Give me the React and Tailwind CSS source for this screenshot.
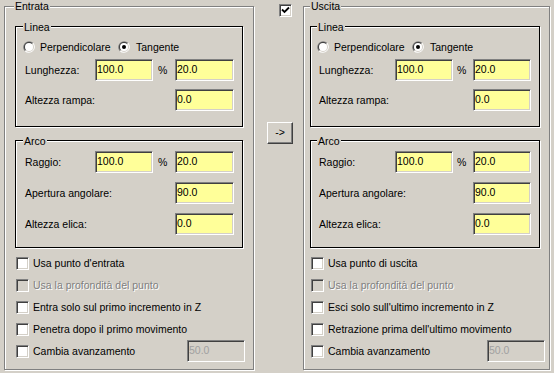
import React from "react";

const Radio = ({ checked }) => (
    <svg width="12" height="12" viewBox="0 0 12 12" className="shrink-0">
        <path d="M1.76 10.24 A6 6 0 0 1 10.24 1.76 Z" fill="#808080" />
        <path d="M1.76 10.24 A6 6 0 0 0 10.24 1.76 Z" fill="#ffffff" />
        <path d="M2.46 9.54 A5 5 0 0 1 9.54 2.46 Z" fill="#404040" />
        <path d="M2.46 9.54 A5 5 0 0 0 9.54 2.46 Z" fill="#d4d0c8" />
        <circle cx="6" cy="6" r="4" fill="#ffffff" />
        {checked && <circle cx="6" cy="6" r="2" fill="#000000" />}
    </svg>
);

const CheckBox = ({ checked, disabled }) => (
    <span
        className={`flex h-[13px] w-[13px] shrink-0 items-center justify-center border border-t-[#808080] border-l-[#808080] border-b-white border-r-white shadow-[inset_1px_1px_0_#404040,inset_-1px_-1px_0_#d4d0c8] ${disabled ? "bg-[#d4d0c8]" : "bg-white"}`}
    >
        {checked && (
            <svg width="9" height="9" viewBox="0 0 9 9">
                <path d="M1 3.5 L3.5 6 L8 1.5" fill="none" stroke="#000" strokeWidth="1.8" />
            </svg>
        )}
    </span>
);

const Field = ({ value, disabled, className = "" }) => (
    <div
        className={`flex h-[22px] items-center border border-t-[#808080] border-l-[#808080] border-b-white border-r-white pb-[2px] pl-[1px] shadow-[inset_1px_1px_0_#404040,inset_-1px_-1px_0_#d4d0c8] ${disabled ? "bg-[#d4d0c8] text-[#a0a0a0]" : "bg-[#ffff99]"} ${className}`}
    >
        {value}
    </div>
);

const GroupBox = ({ title, labelClass, className, children }) => (
    <div className={`relative border border-[#808080] shadow-[inset_1px_1px_0_#fff,1px_1px_0_#fff] ${className}`}>
        <span className={`absolute bg-[#d4d0c8] px-[1px] ${labelClass}`}>{title}</span>
        {children}
    </div>
);

const InnerBox = ({ title, labelClass, className, children }) => (
    <div className={`relative border border-black shadow-[inset_1px_1px_0_#fff,1px_1px_0_#fff] ${className}`}>
        <span className={`absolute top-[-6px] bg-[#d4d0c8] px-[1px] ${labelClass}`}>{title}</span>
        {children}
    </div>
);

const Side = ({ side }) => {
    const left = side === "left";
    const grid = left ? "grid-cols-[70px_58px_22px_59px] pl-[9px]" : "grid-cols-[76px_58px_20px_58px] pl-[8px]";
    const pct = left ? "pl-[5px]" : "pl-[4px]";
    const innerLabel = left ? "left-[7px]" : "left-[6px]";
    const innerW = left ? "w-[228px]" : "w-[230px]";

    const checks = left
        ? [
              { text: "Usa punto d'entrata" },
              { text: "Usa la profondità del punto", disabled: true },
              { text: "Entra solo sul primo incremento in Z" },
              { text: "Penetra dopo il primo movimento" },
          ]
        : [
              { text: "Usa punto di uscita" },
              { text: "Usa la profondità del punto", disabled: true },
              { text: "Esci solo sull'ultimo incremento in Z" },
              { text: "Retrazione prima dell'ultimo movimento" },
          ];

    return (
        <GroupBox
            title={left ? "Entrata" : "Uscita"}
            labelClass={left ? "left-[9px] top-[-7px]" : "left-[6px] top-[-7px]"}
            className={left ? "mt-[6px] h-[364px] w-[250px] pl-[10px] pt-[19px]" : "mt-[6px] h-[364px] w-[247px] pl-[6px] pt-[19px]"}
        >
            {/* Linea */}
            <InnerBox title="Linea" labelClass={innerLabel} className={`h-[101px] ${innerW} pt-[12px]`}>
                <div className={`flex h-[16px] items-center ${left ? "pl-[7px]" : "pl-[6px]"}`}>
                    <label className="flex w-[95px] items-center gap-[5px]">
                        <Radio />
                        <span>Perpendicolare</span>
                    </label>
                    <label className="flex items-center gap-[6px]">
                        <Radio checked />
                        <span>Tangente</span>
                    </label>
                </div>
                <div className={`mt-[4px] grid ${grid} items-center gap-y-[8px]`}>
                    <span>Lunghezza:</span>
                    <Field value="100.0" />
                    <span className={pct}>%</span>
                    <Field value="20.0" />
                    <span className="col-span-3">Altezza rampa:</span>
                    <Field value="0.0" />
                </div>
            </InnerBox>

            {/* Arco */}
            <InnerBox title="Arco" labelClass={innerLabel} className={`mt-[13px] h-[108px] ${innerW} pt-[10px]`}>
                <div className={`grid ${grid} items-center gap-y-[9px]`}>
                    <span>Raggio:</span>
                    <Field value="100.0" />
                    <span className={pct}>%</span>
                    <Field value="20.0" />
                    <span className="col-span-3">Apertura angolare:</span>
                    <Field value="90.0" />
                    <span className="col-span-3">Altezza elica:</span>
                    <Field value="0.0" />
                </div>
            </InnerBox>

            {/* Opzioni */}
            <div className="mt-[4px] flex flex-col pl-[1px]">
                {checks.map((c) => (
                    <label key={c.text} className="flex h-[22px] items-center gap-[4px]">
                        <CheckBox disabled={c.disabled} />
                        <span className={c.disabled ? "text-[#808080] [text-shadow:1px_1px_0_#fff]" : ""}>{c.text}</span>
                    </label>
                ))}
                <div className="flex h-[22px] items-center">
                    <label className={`flex items-center gap-[4px] ${left ? "w-[171px]" : "w-[176px]"}`}>
                        <CheckBox />
                        <span>Cambia avanzamento</span>
                    </label>
                    <Field value="50.0" disabled className="w-[58px]" />
                </div>
            </div>
        </GroupBox>
    );
};

export default function App() {
    return (
        <div className="flex h-[373px] w-[554px] overflow-hidden bg-[#d4d0c8] pl-[4px] font-['Liberation_Sans',Arial,sans-serif] text-[10.5px] leading-[13px] text-black">
            <Side side="left" />
            <div className="flex w-[49px] shrink-0 flex-col">
                <div className="ml-[25px] mt-[4px]">
                    <CheckBox checked />
                </div>
                <button className="ml-[13px] mt-[105px] flex h-[22px] w-[26px] items-center justify-center border border-t-white border-l-white border-b-[#404040] border-r-[#404040] bg-[#d4d0c8] pb-[1px] shadow-[inset_-1px_-1px_0_#808080]">
                    -&gt;
                </button>
            </div>
            <Side side="right" />
        </div>
    );
}
